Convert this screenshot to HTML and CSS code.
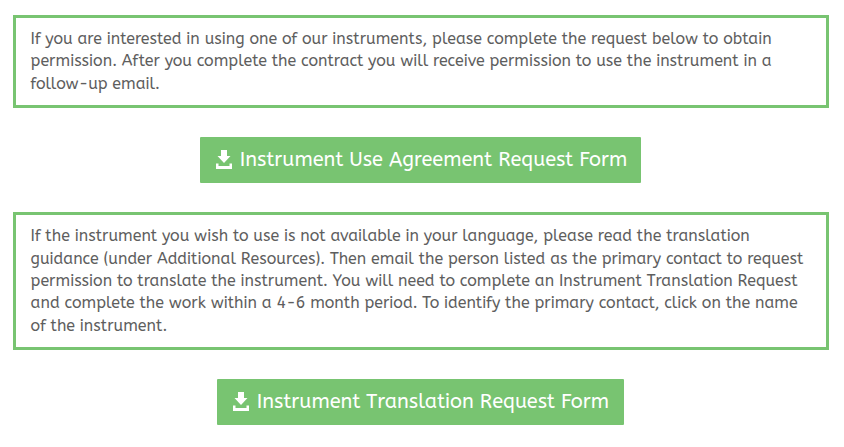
FILE: index.html
```html
<!DOCTYPE html>
<html lang="en">
	<head>
		<meta charset="UTF-8" />
		<title>Instrument Request Forms</title>
		<meta name="viewport" content="width=device-width,initial-scale=1" />
		<link rel="stylesheet" href="styles.css">
	</head>
	<body>
		<main class="requests">
			<p class="notice">
				<span class="line">If you are interested in using one of our instruments, please complete the request below to obtain</span>
				<span class="line">permission. After you complete the contract you will receive permission to use the instrument in a</span>
				<span class="line">follow-up email.</span>
			</p>
			<a class="button button-use" href="#">
				<svg class="icon" viewBox="0 0 16 19"><path d="M5 0h6v6h3.500L8 13 1.500 6H5zM0 13.500h2.500V16h11v-2.500H16V19H0z" /></svg>
				<span>Instrument Use Agreement Request Form</span>
			</a>
			<p class="notice notice-translation">
				<span class="line">If the instrument you wish to use is not available in your language, please read the translation</span>
				<span class="line">guidance (under Additional Resources). Then email the person listed as the primary contact to request</span>
				<span class="line">permission to translate the instrument. You will need to complete an Instrument Translation Request</span>
				<span class="line">and complete the work within a 4-6 month period. To identify the primary contact, click on the name</span>
				<span class="line">of the instrument.</span>
			</p>
			<a class="button button-translation" href="#">
				<svg class="icon" viewBox="0 0 16 19"><path d="M5 0h6v6h3.500L8 13 1.500 6H5zM0 13.500h2.500V16h11v-2.500H16V19H0z" /></svg>
				<span>Instrument Translation Request Form</span>
			</a>
		</main>
	</body>
</html>
```
FILE: styles.css
```css
body{
	margin:0;
	background-color:#fff;
	color:#5e5e5e;
	font:16px/22.4px ABeeZee,"Noto Sans",sans-serif;
}
.requests{
	display:flex;
	flex-direction:column;
	align-items:center;
	gap:29px;
	padding:15px 15px 0 13px;
}
.notice{
	box-sizing:border-box;
	width:100%;
	margin:0;
	padding:10px 14px 9.8px 14.6px;
	border:3px solid #78c471;
}
.notice-translation{
	padding-top:10.2px;
}
.line{
	display:block;
	white-space:nowrap;
}
.button{
	display:flex;
	align-items:center;
	box-sizing:border-box;
	height:46px;
	margin-right:1px;
	padding-left:16px;
	border-radius:1px;
	background-color:#78c471;
	color:#fff;
	font-size:20px;
	text-decoration:none;
	white-space:nowrap;
}
.button-use{
	width:441px;
}
.button-translation{
	width:407px;
}
.icon{
	width:16px;
	height:19px;
	margin:0 7.7px 1px 0;
	fill:currentColor;
}
```
